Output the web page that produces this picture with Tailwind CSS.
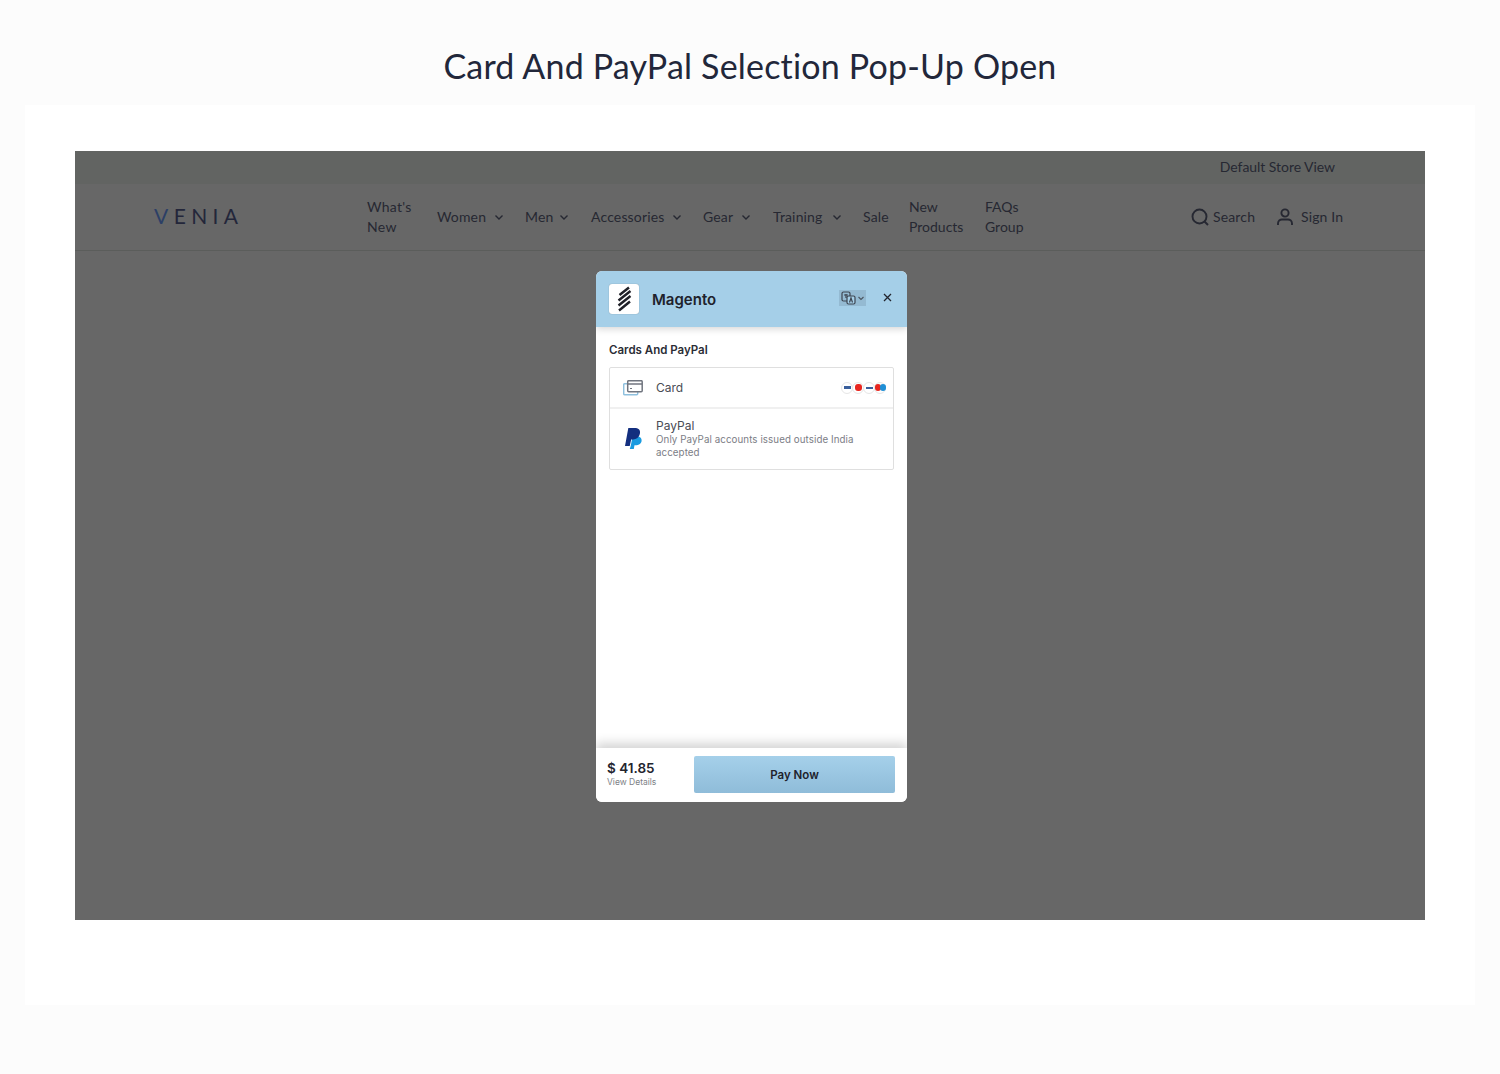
<!DOCTYPE html>
<html><head><meta charset="utf-8"><script src="https://cdn.jsdelivr.net/npm/@tailwindcss/browser@4"></script></head>
<body class="bg-[#fcfcfc] font-['Lato',sans-serif]">
<div class="w-[1500px] h-[1074px] flex flex-col overflow-hidden">
  <h1 class="h-[105px] shrink-0 pt-[44px] text-center text-[34px] leading-[44px] font-normal text-[#22273a] tracking-[0.19px]">Card And PayPal Selection Pop-Up Open</h1>
  <div class="mx-[25px] h-[900px] bg-white pt-[46px] px-[50px]">
    <div class="relative h-[769px] bg-[#676767] text-[#262832]">
      <div class="h-[33px] bg-[#626462] flex items-center justify-end pr-[90px] pb-[2px] text-[14px] tracking-[-0.05px]">Default Store View</div>
      <div class="h-[67px] border-b border-[#5b5d5b] flex items-center pl-[79px] text-[14px] leading-[20px] tracking-[0.15px]">
        <div class="w-[213px] -mt-[2px] text-[21px] tracking-[5.4px] text-[#23263a]"><span class="text-[#2c3f66]">V</span>ENIA</div>
        <div class="w-[70px] tracking-[0.3px]">What's<br>New</div>
        <div class="w-[88px] flex items-center gap-[8px]">Women <svg class="w-[10px] h-[10px]" viewBox="0 0 10 10" fill="none" stroke="#262832" stroke-width="1.4"><path d="M1.5 3.5 5 7l3.5-3.5"/></svg></div>
        <div class="w-[66px] flex items-center gap-[6px]">Men <svg class="w-[10px] h-[10px]" viewBox="0 0 10 10" fill="none" stroke="#262832" stroke-width="1.4"><path d="M1.5 3.5 5 7l3.5-3.5"/></svg></div>
        <div class="w-[112px] flex items-center gap-[8px]">Accessories <svg class="w-[10px] h-[10px]" viewBox="0 0 10 10" fill="none" stroke="#262832" stroke-width="1.4"><path d="M1.5 3.5 5 7l3.5-3.5"/></svg></div>
        <div class="w-[70px] flex items-center gap-[8px]">Gear <svg class="w-[10px] h-[10px]" viewBox="0 0 10 10" fill="none" stroke="#262832" stroke-width="1.4"><path d="M1.5 3.5 5 7l3.5-3.5"/></svg></div>
        <div class="w-[90px] flex items-center gap-[9px]">Training <svg class="w-[10px] h-[10px]" viewBox="0 0 10 10" fill="none" stroke="#262832" stroke-width="1.4"><path d="M1.5 3.5 5 7l3.5-3.5"/></svg></div>
        <div class="w-[46px]">Sale</div>
        <div class="w-[76px] tracking-[0px]">New<br>Products</div>
        <div class="w-[206px] tracking-[0px]">FAQs<br>Group</div>
        <div class="w-[86px] flex items-center gap-[4px]"><svg class="w-[18px] h-[18px]" viewBox="0 0 18 18" fill="none" stroke="#262832" stroke-width="1.9"><circle cx="8.5" cy="8.5" r="7"/><path d="m13.500 13.500 3.500 3.500"/></svg>Search</div>
        <div class="flex items-center gap-[8px]"><svg class="w-[16px] h-[18px]" viewBox="0 0 16 18" fill="none" stroke="#262832" stroke-width="1.9"><circle cx="8" cy="5" r="3.600"/><path d="M1 17v-1.500C1 13 3 11.500 5 11.500h6c2 0 4 1.500 4 4V17"/></svg>Sign In</div>
      </div>
      <div class="absolute left-[521px] top-[120px] w-[311px] h-[531px] bg-white rounded-[6px] overflow-hidden flex flex-col font-['Inter',sans-serif]">
        <div class="h-[56px] shrink-0 bg-[#a5cfe8] shadow-[0_2px_7px_rgba(0,0,0,0.16)] flex items-center pl-[13px] pr-[15px] relative">
          <div class="w-[30px] h-[30px] bg-white rounded-[3px] shadow-[0_0_1px_rgba(0,0,0,0.4)] flex items-center justify-center"><svg class="w-[16px] h-[26px]" viewBox="0 0 16 26" fill="none" stroke="#1f2028" stroke-width="2.400" stroke-linecap="butt"><path d="M3.500 9 13 1.500M2.500 14.500 14.500 5M2.500 19.500 14.500 10M3 24.500 14 15.500"/></svg></div>
          <div class="ml-[13px] mt-[2px] text-[15px] font-semibold text-[#20222c] flex-1">Magento</div>
          <div class="w-[27px] h-[16px] -mt-[2px] bg-[#94bad2] flex items-center pl-[2px] gap-[1px]">
            <svg class="w-[15px] h-[14px]" viewBox="0 0 15 14" fill="none" stroke="#3c4450" stroke-width="1.200"><rect x="1" y="1" width="8" height="9" rx="1.500"/><rect x="6" y="5" width="8" height="8" rx="1.500" fill="#a5cfe8"/><path d="M8.500 11.500 10 7l1.500 4.500"/><path d="M3 4h4M5 3v4"/></svg>
            <svg class="w-[8px] h-[8px]" viewBox="0 0 8 8" fill="none" stroke="#4a5560" stroke-width="1.100"><path d="M1.500 3 4 5.500 6.500 3"/></svg>
          </div>
          <svg class="ml-[17px] -mt-[4px] w-[9px] h-[9px]" viewBox="0 0 9 9" fill="none" stroke="#22252e" stroke-width="1.300"><path d="m1 1 7 7M8 1 1 8"/></svg>
        </div>
        <div class="flex-1 px-[13px]">
          <div class="mt-[16px] text-[11.5px] leading-[15px] font-semibold text-[#2b2d36]">Cards And PayPal</div>
          <div class="mt-[9px] border border-[#dfdfdf] rounded-[2px] w-[285px]">
            <div class="h-[41px] border-b-2 border-[#f0f0f0] flex items-center pl-[13px] pr-[7px]">
              <svg class="w-[20px] h-[16px]" viewBox="0 0 20 16" fill="none"><rect x=".7" y="3.700" width="14" height="11" rx="1" stroke="#8fc0de" stroke-width="1.500"/><rect x="4.700" y=".7" width="14.500" height="11" rx="1" fill="#fff" stroke="#70757f" stroke-width="1.500"/><path d="M4.700 4h14.500" stroke="#70757f" stroke-width="1.500"/><path d="M7 8.500h2" stroke="#70757f"/></svg>
              <div class="ml-[13px] text-[12px] text-[#4a4c55] flex-1">Card</div>
              <div class="flex">
                <div class="w-[12px] h-[12px] rounded-full bg-white border border-[#e6e6e6] flex items-center justify-center"><div class="w-[7px] h-[3px] bg-[#3a5f9c]"></div></div>
                <div class="w-[12px] h-[12px] -ml-[1px] rounded-full bg-white border border-[#e6e6e6] flex items-center justify-center"><div class="w-[7px] h-[7px] rounded-[3px] bg-[#e8261f]"></div></div>
                <div class="w-[12px] h-[12px] -ml-[1px] rounded-full bg-white border border-[#e6e6e6] flex items-center justify-center"><div class="w-[7px] h-[2px] bg-[#3a5f9c]"></div></div>
                <div class="w-[12px] h-[12px] -ml-[1px] rounded-full bg-white border border-[#e6e6e6] flex items-center justify-center"><div class="w-[6px] h-[7px] shrink-0 rounded-full bg-[#e8261f]"></div><div class="w-[6px] h-[7px] shrink-0 -ml-[1px] rounded-full bg-[#1f8fd6]"></div></div>
              </div>
            </div>
            <div class="flex items-center pl-[15px] h-[60px]">
              <svg class="w-[18px] h-[21px] shrink-0 -mt-[2px]" viewBox="0 0 19 22"><path d="M6 19 8 9h5c3 0 5 2 4.500 5-.5 2.500-2.500 4-5 4H10l-.7 4H5z" fill="#1a9be0"/><path d="M3.500 0H10c4 0 6.500 2 5.800 5.500C15 10 12 12 8.500 12H6.500L5 19H0z" fill="#132f7f"/></svg>
              <div class="ml-[13px] w-[205px]">
                <div class="text-[12px] leading-[13px] mb-[1px] -mt-[1px] text-[#4a4c55]">PayPal</div>
                <div class="text-[9.75px] leading-[13px] text-[#7b7d85] tracking-[0.08px]">Only PayPal accounts issued outside India accepted</div>
              </div>
            </div>
          </div>
        </div>
        <div class="h-[54px] shrink-0 shadow-[0_-5px_10px_rgba(0,0,0,0.17)] flex items-center pl-[11px] pr-[12px] pb-[2px] bg-white">
          <div class="w-[87px]">
            <div class="text-[13.5px] leading-[16px] font-semibold text-[#23252e]">$ 41.85</div>
            <div class="text-[8.5px] leading-[11px] mt-[1px] text-[#7d7f86]">View Details</div>
          </div>
          <div class="w-[201px] h-[37px] pt-[4px] rounded-[2px] bg-gradient-to-b from-[#a5d0ea] to-[#8fbcd9] flex items-center justify-center text-[11.500px] font-semibold text-[#20222c]">Pay Now</div>
        </div>
      </div>
    </div>
  </div>
</div>
</body></html>
